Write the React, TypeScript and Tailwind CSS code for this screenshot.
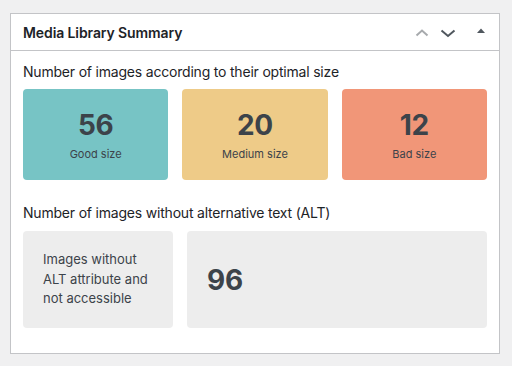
import React from "react";

const font = { fontFamily: "Inter, 'Noto Sans', 'Liberation Sans', sans-serif" };

function SizeCard({ n, label, bg }: { n: number; label: string; bg: string }) {
  return (
    <div className={`flex-1 h-[91px] rounded-[4px] flex flex-col items-center pt-[20px] ${bg}`}>
      <div className="text-[28px] leading-[32px] font-bold text-[#3c434a] tracking-[-0.3px]">{n}</div>
      <div className="mt-[5px] text-[11px] leading-[16px] text-[#3c434a]">{label}</div>
    </div>
  );
}

export default function App() {
  return (
    <div className="w-[512px] h-[366px] bg-[#f0f0f1] pt-[13px] pl-[10px]" style={font}>
      <div className="w-[490px] h-[341px] bg-white border border-[#c3c4c7] flex flex-col">
        <div className="h-[37px] border-b border-[#c3c4c7] flex items-center pl-[12px] pr-[12px]">
          <div className="text-[14px] font-semibold text-[#1d2327] flex-1 tracking-[-0.1px]">Media Library Summary</div>
          <svg width="14" height="10" viewBox="0 0 14 10" className="mr-[11px] mt-[1px]">
            <path d="M1.5 7.5 L7 2.5 L12.5 7.5" fill="none" stroke="#a7aaad" strokeWidth="2" />
          </svg>
          <svg width="16" height="10" viewBox="0 0 16 10" className="mr-[20px] mt-[1px]">
            <path d="M1.5 2.5 L8 8 L14.5 2.5" fill="none" stroke="#50575e" strokeWidth="2" />
          </svg>
          <svg width="10" height="8" viewBox="0 0 10 8" className="mr-[1px] mb-[2px]">
            <path d="M1 6 L5 1.5 L9 6 Z" fill="#50575e" />
          </svg>
        </div>
        <div className="px-[12px] pt-[11px]">
          <div className="text-[14px] leading-[20px] text-[#1d2327] tracking-[-0.2px]">
            Number of images according to their optimal size
          </div>
          <div className="flex gap-[14px] mt-[7px]">
            <SizeCard n={56} label="Good size" bg="bg-[#77c4c5]" />
            <SizeCard n={20} label="Medium size" bg="bg-[#eecb88]" />
            <SizeCard n={12} label="Bad size" bg="bg-[#f19678]" />
          </div>
          <div className="mt-[23px] text-[14px] leading-[20px] text-[#1d2327] tracking-[-0.2px]">
            Number of images without alternative text (ALT)
          </div>
          <div className="flex gap-[14px] mt-[8px]">
            <div className="w-[150px] h-[97px] rounded-[4px] bg-[#ededed] flex items-center px-[20px]">
              <div className="text-[13px] leading-[19.5px] text-[#3c434a]">
                Images without ALT attribute and not accessible
              </div>
            </div>
            <div className="flex-1 h-[97px] rounded-[4px] bg-[#ededed] flex items-center px-[20px]">
              <div className="text-[28px] leading-[32px] font-bold text-[#3c434a] tracking-[-0.3px]">96</div>
            </div>
          </div>
        </div>
      </div>
    </div>
  );
}
